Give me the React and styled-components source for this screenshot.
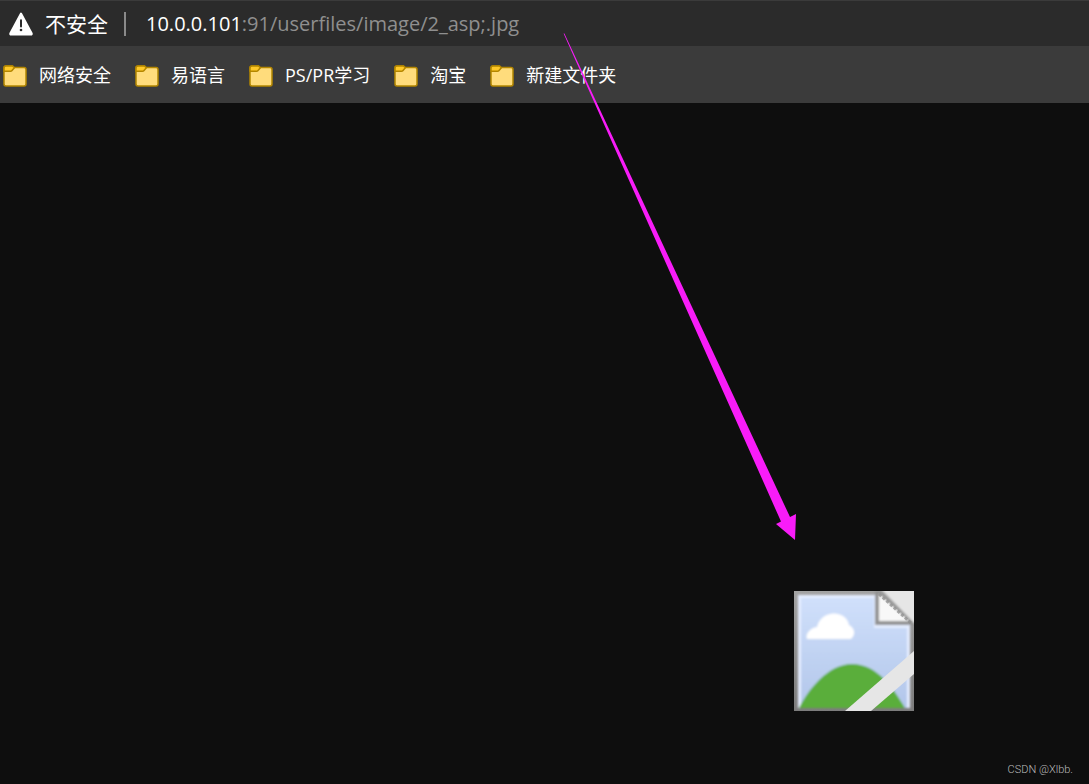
import React from "react";
import styled, { createGlobalStyle } from "styled-components";

const GlobalStyle = createGlobalStyle`
  * {
    box-sizing: border-box;
  }

  body {
    margin: 0;
    background: #0e0e0e;
    font-family: "Open Sans", "Noto Sans CJK SC", sans-serif;
  }
`;

const Window = styled.div`
  position: relative;
  display: flex;
  flex-direction: column;
  min-height: 100vh;
  overflow: hidden;
`;

const AddressBar = styled.header`
  display: flex;
  align-items: center;
  height: 46px;
  padding-left: 8px;
  background: #2b2b2b;
  border-top: 1px solid #3b3b3b;
`;

const Label = styled.span`
  padding-bottom: 2px;
`;

const SecurityButton = styled.button`
  display: flex;
  align-items: center;
  gap: 11px;
  padding: 0;
  border: 0;
  background: none;
  color: #ffffff;
  font-family: "Noto Sans CJK SC", sans-serif;
  font-size: 21px;
  line-height: 30px;
`;

const Divider = styled.span`
  width: 2px;
  height: 24px;
  margin: 0 20px 0 16px;
  background: #8a8a8a;
`;

const Url = styled.div`
  color: #8f8f8f;
  font-family: "Open Sans", sans-serif;
  font-size: 20px;
  line-height: 30px;
  white-space: nowrap;
`;

const Host = styled.span`
  color: #ffffff;
`;

const BookmarksBar = styled.nav`
  display: flex;
  align-items: center;
  gap: 24px;
  height: 57px;
  padding: 2px 0 0 3px;
  background: #3b3b3b;
`;

const BookmarkFolder = styled.button`
  display: flex;
  align-items: center;
  gap: 12px;
  padding: 0;
  border: 0;
  background: none;
  color: #ffffff;
  font-family: "Open Sans", "Noto Sans CJK SC", sans-serif;
  font-size: 18px;
  line-height: 26px;
  white-space: nowrap;
`;

const Content = styled.main`
  flex: 1;
  display: flex;
  align-items: flex-end;
  justify-content: flex-end;
  padding: 0 175px 73px 0;
`;

const Arrow = styled.svg`
  position: absolute;
  top: 30px;
  left: 560px;
  pointer-events: none;
`;

const Watermark = styled.span`
  position: absolute;
  right: 16px;
  bottom: 6px;
  color: #bcbcbc;
  font-family: Roboto, sans-serif;
  font-size: 11px;
  font-weight: 300;
  line-height: 16px;
`;

const WarningIcon = () => (
  <svg width="26" height="24" viewBox="0 0 26 24" aria-hidden="true">
    <path
      d="M13 1.6 L23.6 21.2 Q24.2 22.6 22.8 22.6 H3.2 Q1.8 22.6 2.4 21.2 Z"
      fill="#fff"
      stroke="#fff"
      strokeWidth="2"
      strokeLinejoin="round"
    />
    <path d="M13 8.2 V14.4" stroke="#2b2b2b" strokeWidth="2" strokeLinecap="round" />
    <circle cx="13" cy="18" r="1.3" fill="#2b2b2b" />
  </svg>
);

const FolderIcon = () => (
  <svg width="24" height="22" viewBox="0 0 24 22" aria-hidden="true">
    <path
      d="M1 5 V19 Q1 21 3 21 H21 Q23 21 23 19 V4.5 Q23 2.5 21 2.5 H11 L9.5 1 H3 Q1 1 1 3 Z"
      fill="#ffdc7c"
      stroke="#b38600"
      strokeWidth="1.5"
    />
    <path
      d="M1 3 Q1 1 3 1 H9.5 L11.4 2.8 L8.8 5.8 Q8.4 6.3 7.4 6.3 H1 Z"
      fill="#ffc928"
      stroke="#b38600"
      strokeWidth="1.5"
      strokeLinejoin="round"
    />
  </svg>
);

const BrokenImage = () => (
  <svg width="120" height="120" viewBox="0 0 120 120" role="img">
    <defs>
      <linearGradient id="sky" x1="0" y1="0" x2="0" y2="1">
        <stop offset="0" stopColor="#d0e0fb" />
        <stop offset="1" stopColor="#b2c6ea" />
      </linearGradient>
      <linearGradient id="frame" x1="0" y1="0" x2="0" y2="1">
        <stop offset="0" stopColor="#a3a3a3" />
        <stop offset="1" stopColor="#7c7c7c" />
      </linearGradient>
      <filter id="soft" x="-10%" y="-10%" width="120%" height="120%">
        <feGaussianBlur stdDeviation="0.8" />
      </filter>
      <clipPath id="edge">
        <path d="M0 0 H120 V120 H0 Z" />
      </clipPath>
    </defs>
    <g clipPath="url(#edge)">
      <path d="M0 0 H120 V120 H0 Z" fill="url(#frame)" />
      <g filter="url(#soft)">
        <path d="M4 4 H82 V34 H116 V117 H4 Z" fill="#e5edff" />
        <path d="M7 7 H80 V37 H113 V117 H7 Z" fill="url(#sky)" />
        <path
          d="M13 48 C11 43 16 37 23 36 C25 27 33 22 41 22.5 C49 23 54 28 55 34 C61 37 62 44 57 48 Z"
          fill="#fff"
        />
        <path
          d="M5 117 C14 99 34 73 58 73 C84 73 100 99 111 117 Z"
          fill="#5aae3a"
        />
        <path d="M81 0 H86 L120 30 V34 H81 Z" fill="#929292" />
        <path d="M85 3 L115 30 H85 Z" fill="#f8f8f8" />
        <path d="M85 -4 H124 V32 H120 Z" fill="#e6e6e6" />
      </g>
      <path
        d="M85 3 L117 32"
        stroke="#8c8c8c"
        strokeWidth="3"
        strokeDasharray="3 2"
        opacity="0.7"
      />
      <path d="M51 120 L120 60 V83 L77 120 Z" fill="#e6e6e6" />
    </g>
  </svg>
);

const folders = ["网络安全", "易语言", "PS/PR学习", "淘宝", "新建文件夹"];

const App = () => (
  <Window>
    <GlobalStyle />
    <AddressBar>
      <SecurityButton type="button">
        <WarningIcon />
        <Label>不安全</Label>
      </SecurityButton>
      <Divider />
      <Url>
        <Host>10.0.0.101</Host>:91/userfiles/image/2_asp;.jpg
      </Url>
    </AddressBar>
    <BookmarksBar>
      {folders.map((name) => (
        <BookmarkFolder type="button" key={name}>
          <FolderIcon />
          <Label>{name}</Label>
        </BookmarkFolder>
      ))}
    </BookmarksBar>
    <Content>
      <BrokenImage />
    </Content>
    <Arrow width="240" height="514" viewBox="0 0 240 514" aria-hidden="true">
      <path
        d="M3.6 3.5 L4.4 3.5 L230 487 L236 484 L235 510 L216 494 L221 491.5 Z"
        fill="#f81cf8"
      />
    </Arrow>
    <Watermark>CSDN @Xlbb.</Watermark>
  </Window>
);

export default App;
